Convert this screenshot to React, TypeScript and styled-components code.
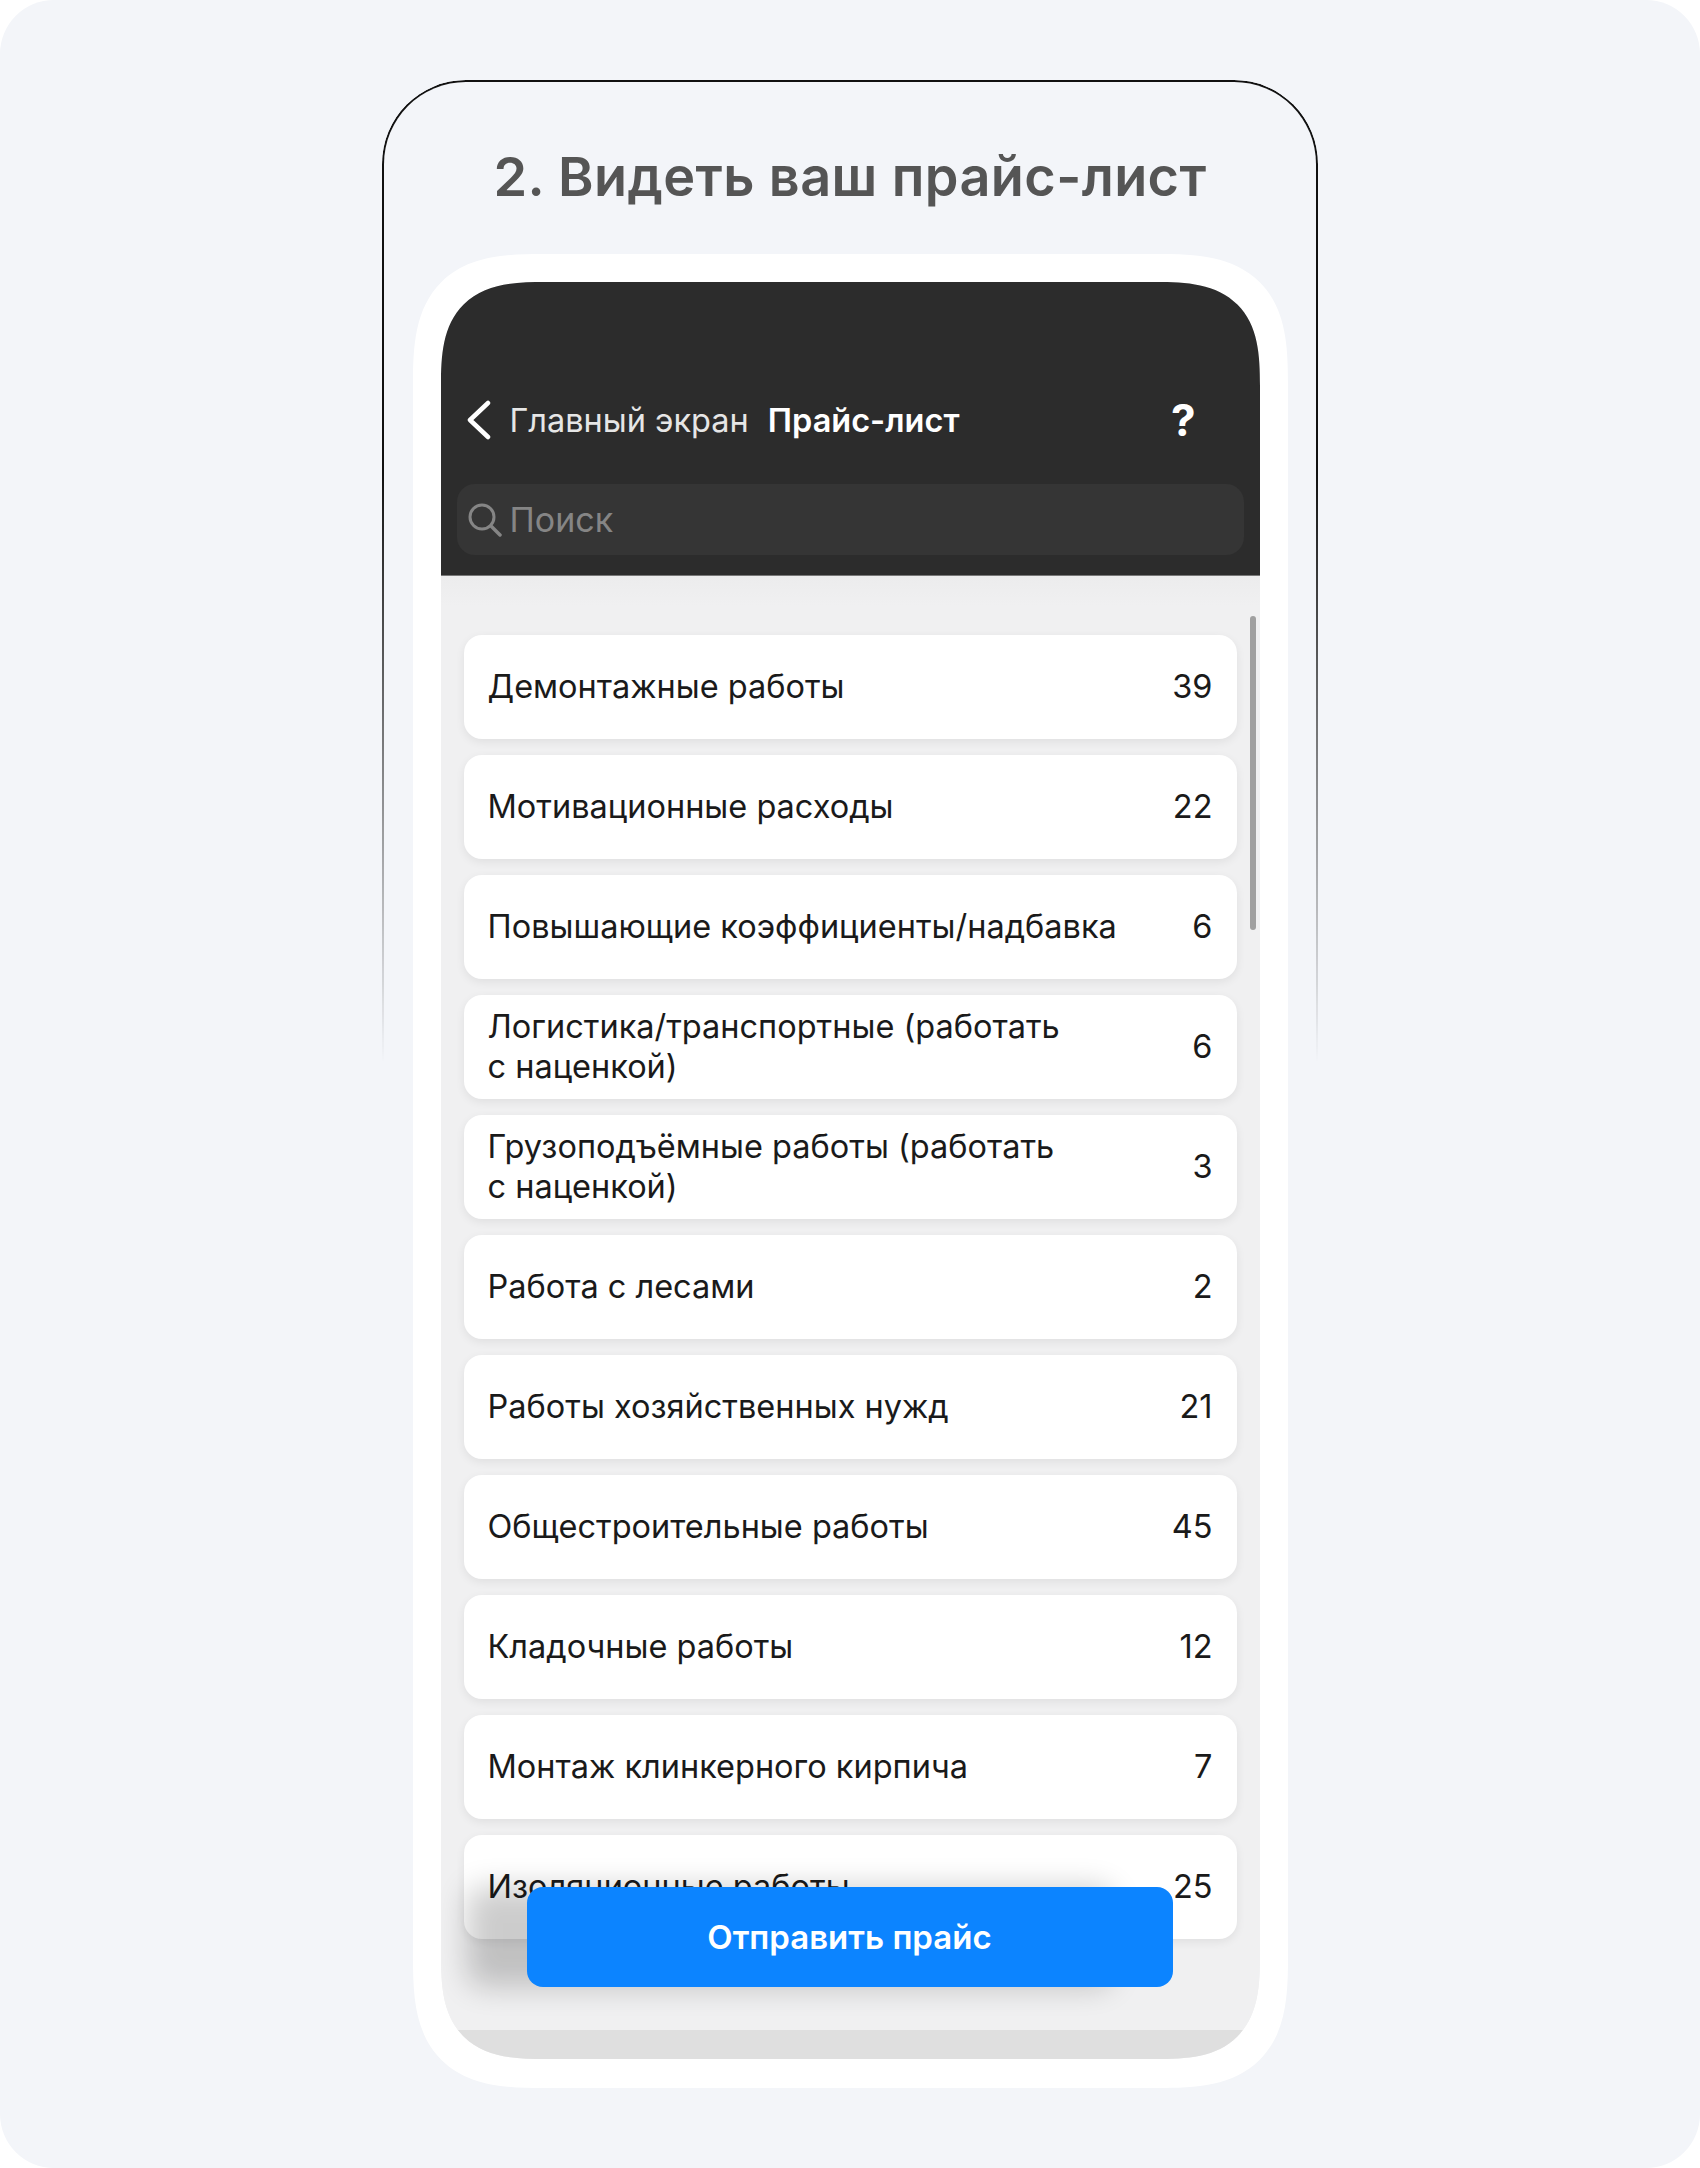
import React from "react";
import styled, { createGlobalStyle } from "styled-components";

const Global = createGlobalStyle`
  html, body { margin: 0; padding: 0; background: #fff; }
  * { box-sizing: border-box; }
`;

const Page = styled.div`
  width: 1700px;
  height: 2168px;
  background: #f3f5f9;
  border-radius: 54px;
  padding-top: 80px;
  display: flex;
  flex-direction: column;
  align-items: center;
  font-family: Inter, "Liberation Sans", sans-serif;
  overflow: hidden;
`;

const Frame = styled.section`
  position: relative;
  width: 936px;
  display: flex;
  flex-direction: column;
  align-items: center;
  &::before {
    content: "";
    position: absolute;
    left: 0;
    right: 0;
    top: 0;
    height: 980px;
    border: 2px solid #111;
    border-bottom: 0;
    border-radius: 84px 84px 0 0;
    -webkit-mask-image: linear-gradient(to bottom, #000 0, #000 40%, transparent 100%);
    mask-image: linear-gradient(to bottom, #000 0, #000 40%, transparent 100%);
    pointer-events: none;
  }
`;

const Title = styled.h1`
  margin: 0;
  height: 174px;
  padding-top: 60px;
  font-size: 54px;
  line-height: 74px;
  font-weight: 600;
  letter-spacing: 0.4px;
  color: #555555;
  white-space: nowrap;
`;

const Phone = styled.div`
  width: 875px;
  height: 1834px;
  padding: 28px 28px 29px;
  background: #fff;
  border-radius: 130px;
  corner-shape: superellipse(1.5);
`;

const Screen = styled.div`
  position: relative;
  height: 100%;
  display: flex;
  flex-direction: column;
  border-radius: 104px;
  corner-shape: superellipse(1.5);
  overflow: hidden;
  background: #f0f0f1;
`;

const Header = styled.header`
  height: 294px;
  background: #2c2c2c;
  border-bottom: 1px solid #777;
  padding: 0 16px 20px;
  display: flex;
  flex-direction: column;
  justify-content: flex-end;
  flex-shrink: 0;
`;

const Nav = styled.div`
  height: 60px;
  margin-bottom: 34px;
  padding: 0 48px 0 9px;
  display: flex;
  align-items: center;
  color: #fff;
`;

const BackLink = styled.span`
  margin-left: 18px;
  font-size: 32.5px;
  color: #e6e6e6;
`;

const NavTitle = styled.span`
  margin-left: 19px;
  font-size: 32.5px;
  font-weight: 600;
  flex: 1;
`;

const Help = styled.span`
  font-size: 44px;
  font-weight: 700;
`;

const Search = styled.div`
  height: 71px;
  background: #353535;
  border-radius: 18px;
  padding: 0 11px;
  display: flex;
  align-items: center;
  gap: 8px;
  color: #858585;
  font-size: 34px;
`;

const List = styled.div`
  flex: 1;
  min-height: 0;
  padding: 59px 23px 0;
  display: flex;
  flex-direction: column;
  gap: 16px;
  background: linear-gradient(#ececed 0, #f0f0f1 30px);
`;

const Card = styled.div`
  flex-shrink: 0;
  min-height: 104px;
  padding: 0 24px;
  display: flex;
  align-items: center;
  justify-content: space-between;
  background: #fff;
  border-radius: 18px;
  box-shadow: 0 3px 10px rgba(0, 0, 0, 0.07);
  color: #1a1a1a;
  font-size: 32.5px;
`;

const Label = styled.span`
  line-height: 40px;
  white-space: pre-line;
`;

const Count = styled.span`
  line-height: 40px;
`;

const Footer = styled.div`
  height: 29px;
  flex-shrink: 0;
  background: #dfdfdf;
  position: relative;
`;

const Scrollbar = styled.div`
  position: absolute;
  top: 334px;
  right: 4px;
  width: 6px;
  height: 314px;
  border-radius: 3px;
  background: #a0a0a0;
`;

const SendButton = styled.button`
  position: absolute;
  left: 86px;
  right: 87px;
  bottom: 72px;
  height: 100px;
  border: 0;
  border-radius: 16px;
  background: #0c84ff;
  color: #fff;
  font-family: inherit;
  font-size: 33px;
  font-weight: 600;
  box-shadow: -60px 0 30px rgba(0, 0, 0, 0.2);
`;

const items: [string, number][] = [
  ["Демонтажные работы", 39],
  ["Мотивационные расходы", 22],
  ["Повышающие коэффициенты/надбавка", 6],
  ["Логистика/транспортные (работать\nс наценкой)", 6],
  ["Грузоподъёмные работы (работать\nс наценкой)", 3],
  ["Работа с лесами", 2],
  ["Работы хозяйственных нужд", 21],
  ["Общестроительные работы", 45],
  ["Кладочные работы", 12],
  ["Монтаж клинкерного кирпича", 7],
  ["Изоляционные работы", 25],
];

export default function App() {
  return (
    <>
      <Global />
      <Page>
        <Frame>
          <Title>2. Видеть ваш прайс-лист</Title>
          <Phone>
            <Screen>
              <Header>
                <Nav>
                  <svg width="26" height="40" viewBox="0 0 26 40" fill="none">
                    <path d="M22 3 L4 20 L22 37" stroke="#fff" strokeWidth="4.5" strokeLinecap="round" strokeLinejoin="round" />
                  </svg>
                  <BackLink>Главный экран</BackLink>
                  <NavTitle>Прайс-лист</NavTitle>
                  <Help>?</Help>
                </Nav>
                <Search>
                  <svg width="34" height="34" viewBox="0 0 34 34" fill="none">
                    <circle cx="14" cy="14" r="12" stroke="#858585" strokeWidth="3" />
                    <path d="M23 23 L32 32" stroke="#858585" strokeWidth="3.5" strokeLinecap="round" />
                  </svg>
                  Поиск
                </Search>
              </Header>
              <List>
                {items.map(([label, count]) => (
                  <Card key={label}>
                    <Label>{label}</Label>
                    <Count>{count}</Count>
                  </Card>
                ))}
              </List>
              <Footer />
              <Scrollbar />
              <SendButton>Отправить прайс</SendButton>
            </Screen>
          </Phone>
        </Frame>
      </Page>
    </>
  );
}
